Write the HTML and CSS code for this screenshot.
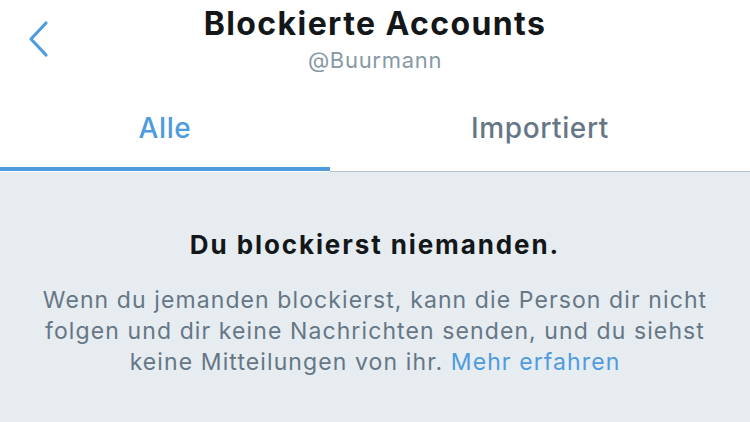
FILE: index.html
```html
<!DOCTYPE html>
<html lang="de">
<head>
<meta charset="utf-8">
<link rel="stylesheet" href="styles.css">
</head>
<body>
<div class="screen">
  <header class="nav">
    <button class="back" aria-label="Zurück">
      <svg width="24" height="40" viewBox="0 0 24 40"><path d="M19 5 L4 21 L19 37" fill="none" stroke="#4e9be0" stroke-width="3.2" stroke-linecap="round" stroke-linejoin="round"/></svg>
    </button>
    <div class="titles">
      <div class="title">Blockierte Accounts</div>
      <div class="subtitle">@Buurmann</div>
    </div>
  </header>
  <nav class="tabs">
    <div class="tab active">Alle</div>
    <div class="tab">Importiert</div>
  </nav>
  <main class="empty">
    <h1 class="empty-title">Du blockierst niemanden.</h1>
    <p class="empty-text">Wenn du jemanden blockierst, kann die Person dir nicht folgen und dir keine Nachrichten senden, und du siehst keine Mitteilungen von ihr. <a class="more">Mehr erfahren</a></p>
  </main>
</div>
</body>
</html>
```
FILE: styles.css
```css
html, body { margin: 0; padding: 0; }
body { font-family: Inter, "Noto Sans", sans-serif; background: #fff; }
.screen { width: 750px; height: 422px; display: flex; flex-direction: column; overflow: hidden; }
.nav { position: relative; height: 88px; display: flex; justify-content: center; }
.back { position: absolute; left: 27px; top: 18px; background: none; border: 0; padding: 0; }
.titles { display: flex; flex-direction: column; align-items: center; padding-top: 4px; }
.title { font-size: 32px; font-weight: 700; color: #14171a; line-height: 40px; letter-spacing: 1.4px; }
.subtitle { font-size: 22px; color: #8899a6; line-height: 28px; margin-top: 2px; letter-spacing: 0.7px; }
.tabs { display: flex; height: 84px; }
.tab { display: flex; align-items: center; justify-content: center; font-size: 28px; font-weight: 500; color: #657786; border-bottom: 1px solid #b8c3cc; box-sizing: border-box; padding-bottom: 4px; letter-spacing: 0.6px; }
.tab.active { width: 330px; color: #4e9be0; border-bottom: 4px solid #4e9be0; padding-bottom: 0; height: 83px; }
.tab:not(.active) { flex: 1; }
.empty { flex: 1; background: #e6ecf0; text-align: center; padding: 0 30px; }
.empty-title { font-size: 26px; font-weight: 700; color: #14171a; margin: 57px 0 0; line-height: 32px; letter-spacing: 1.9px; }
.empty-text { font-size: 23px; color: #657786; line-height: 31px; margin: 24px 0 0; letter-spacing: 1.1px; }
.more { color: #4e9be0; }
```
